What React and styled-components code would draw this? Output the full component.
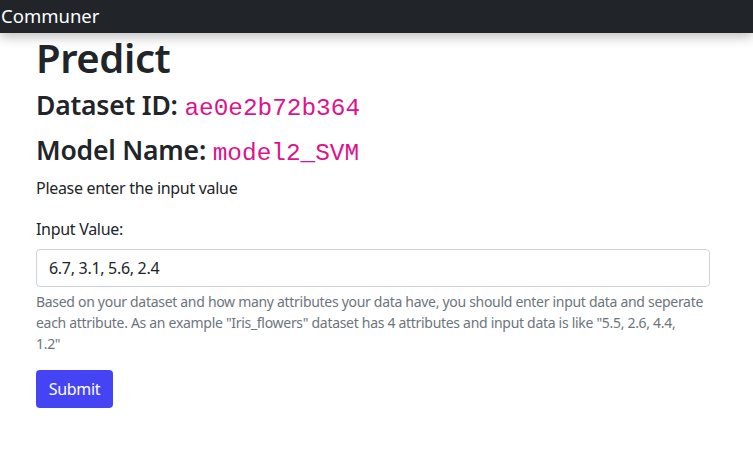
import React from "react";
import styled, { createGlobalStyle } from "styled-components";

const GlobalStyle = createGlobalStyle`
  * { box-sizing: border-box; }
  body {
    margin: 0;
    background: #fff;
    color: #212529;
    font-family: "Noto Sans", "Open Sans", sans-serif;
    font-size: 16px;
    line-height: 1.5;
  }
`;

const NavBar = styled.nav`
  height: 33px;
  background: #212529;
  display: flex;
  align-items: center;
  box-shadow: 0 4px 12px rgba(0, 0, 0, 0.25);
  position: relative;
`;

const Brand = styled.span`
  color: #fff;
  font-size: 18.5px;
  line-height: 1;
  padding-left: 1px;
`;

const Main = styled.main`
  width: 674px;
  margin-left: 36px;
  padding-top: 1px;
`;

const Title = styled.h1`
  font-size: 40px;
  font-weight: 600;
  line-height: 1.2;
  margin: 0 0 8px;
  letter-spacing: -0.4px;
`;

const Info = styled.h3`
  font-size: 26.5px;
  font-weight: 600;
  line-height: 1.2;
  margin: 0 0 ${p => p.$gap || 8}px;
  letter-spacing: -0.2px;
`;

const Code = styled.code`
  font-family: "Liberation Mono", monospace;
  color: #e0128a;
  font-size: 24.4px;
  font-weight: 400;
  letter-spacing: 0;
`;

const Lead = styled.p`
  margin: 0 0 17px;
  font-size: 16px;
  letter-spacing: -0.3px;
`;

const Field = styled.div`
  display: flex;
  flex-direction: column;
`;

const Label = styled.label`
  font-size: 16px;
  margin-bottom: 8px;
  letter-spacing: -0.3px;
`;

const Input = styled.input`
  height: 38px;
  border: 1px solid #ced4da;
  border-radius: 4px;
  padding: 6px 12px;
  font-family: inherit;
  font-size: 16px;
  color: #212529;
  letter-spacing: -0.3px;
  outline: none;
`;

const Help = styled.div`
  margin-top: 4px;
  font-size: 14px;
  line-height: 21px;
  color: #6c757d;
  letter-spacing: -0.3px;
`;

const SubmitButton = styled.button`
  margin-top: 16px;
  width: 77px;
  height: 38px;
  background: #4444f5;
  color: #fff;
  border: none;
  border-radius: 4px;
  font-family: inherit;
  font-size: 16px;
  letter-spacing: -0.3px;
  cursor: pointer;
`;

export default function App() {
  return (
    <>
      <GlobalStyle />
      <NavBar>
        <Brand>Communer</Brand>
      </NavBar>
      <Main>
        <Title>Predict</Title>
        <Info $gap={12}>
          Dataset ID: <Code>ae0e2b72b364</Code>
        </Info>
        <Info $gap={7}>
          Model Name: <Code>model2_SVM</Code>
        </Info>
        <Lead>Please enter the input value</Lead>
        <Field>
          <Label htmlFor="input-value">Input Value:</Label>
          <Input id="input-value" defaultValue="6.7, 3.1, 5.6, 2.4" />
          <Help>
            Based on your dataset and how many attributes your data have, you should enter input data and seperate
            each attribute. As an example "Iris_flowers" dataset has 4 attributes and input data is like "5.5, 2.6, 4.4,
            <br />
            1.2"
          </Help>
        </Field>
        <SubmitButton type="button">Submit</SubmitButton>
      </Main>
    </>
  );
}
